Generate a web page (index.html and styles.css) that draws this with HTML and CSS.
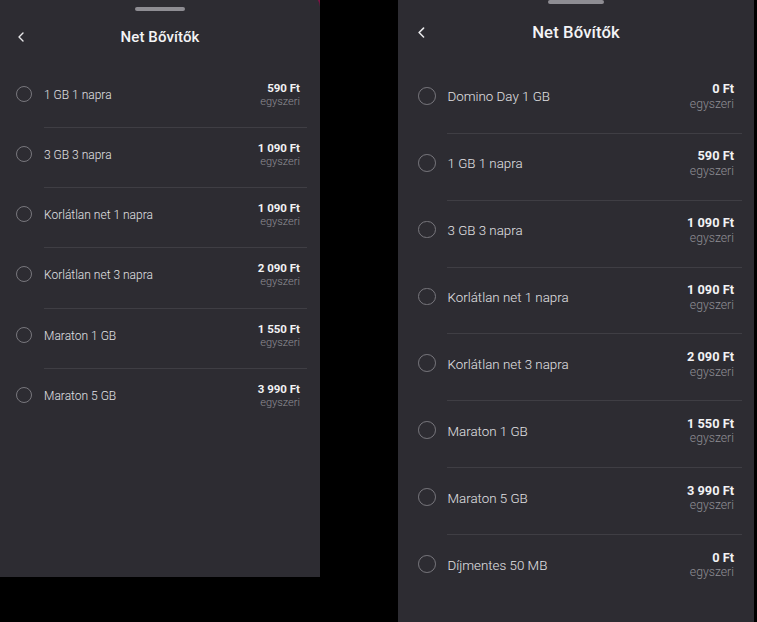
FILE: index.html
```html
<!DOCTYPE html>
<html lang="hu">
<head>
    <meta charset="UTF-8">
    <meta name="viewport" content="width=device-width, initial-scale=1.0">
    <title>Net Bővítők</title>
    <link rel="stylesheet" href="styles.css">
</head>
<body>
    <div class="screens">
        <div class="frame">
            <div class="sheet">
                <div class="handle"></div>
                <div class="header">
                    <button class="back" aria-label="Vissza">
                        <svg width="6" height="10" viewBox="0 0 6 10"><polyline points="5,1 1,5 5,9" fill="none" stroke="#e8e8ea" stroke-width="1.4" stroke-linecap="round" stroke-linejoin="round"/></svg>
                    </button>
                    <h1>Net Bővítők</h1>
                    <span></span>
                </div>
                <ul class="list">
                    <li class="row"><span class="radio"></span><div class="body"><span class="name">1 GB 1 napra</span><div class="price"><strong>590 Ft</strong><small>egyszeri</small></div></div></li>
                    <li class="row"><span class="radio"></span><div class="body"><span class="name">3 GB 3 napra</span><div class="price"><strong>1 090 Ft</strong><small>egyszeri</small></div></div></li>
                    <li class="row"><span class="radio"></span><div class="body"><span class="name">Korlátlan net 1 napra</span><div class="price"><strong>1 090 Ft</strong><small>egyszeri</small></div></div></li>
                    <li class="row"><span class="radio"></span><div class="body"><span class="name">Korlátlan net 3 napra</span><div class="price"><strong>2 090 Ft</strong><small>egyszeri</small></div></div></li>
                    <li class="row"><span class="radio"></span><div class="body"><span class="name">Maraton 1 GB</span><div class="price"><strong>1 550 Ft</strong><small>egyszeri</small></div></div></li>
                    <li class="row"><span class="radio"></span><div class="body"><span class="name">Maraton 5 GB</span><div class="price"><strong>3 990 Ft</strong><small>egyszeri</small></div></div></li>
                </ul>
            </div>
        </div>

        <div class="sheet sheet-large">
            <div class="handle"></div>
            <div class="header">
                <button class="back" aria-label="Vissza">
                    <svg width="6" height="10" viewBox="0 0 6 10"><polyline points="5,1 1,5 5,9" fill="none" stroke="#e8e8ea" stroke-width="1.4" stroke-linecap="round" stroke-linejoin="round"/></svg>
                </button>
                <h1>Net Bővítők</h1>
                <span></span>
            </div>
            <ul class="list">
                <li class="row"><span class="radio"></span><div class="body"><span class="name">Domino Day 1 GB</span><div class="price"><strong>0 Ft</strong><small>egyszeri</small></div></div></li>
                <li class="row"><span class="radio"></span><div class="body"><span class="name">1 GB 1 napra</span><div class="price"><strong>590 Ft</strong><small>egyszeri</small></div></div></li>
                <li class="row"><span class="radio"></span><div class="body"><span class="name">3 GB 3 napra</span><div class="price"><strong>1 090 Ft</strong><small>egyszeri</small></div></div></li>
                <li class="row"><span class="radio"></span><div class="body"><span class="name">Korlátlan net 1 napra</span><div class="price"><strong>1 090 Ft</strong><small>egyszeri</small></div></div></li>
                <li class="row"><span class="radio"></span><div class="body"><span class="name">Korlátlan net 3 napra</span><div class="price"><strong>2 090 Ft</strong><small>egyszeri</small></div></div></li>
                <li class="row"><span class="radio"></span><div class="body"><span class="name">Maraton 1 GB</span><div class="price"><strong>1 550 Ft</strong><small>egyszeri</small></div></div></li>
                <li class="row"><span class="radio"></span><div class="body"><span class="name">Maraton 5 GB</span><div class="price"><strong>3 990 Ft</strong><small>egyszeri</small></div></div></li>
                <li class="row"><span class="radio"></span><div class="body"><span class="name">Díjmentes 50 MB</span><div class="price"><strong>0 Ft</strong><small>egyszeri</small></div></div></li>
            </ul>
        </div>
    </div>
</body>
</html>
```

FILE: styles.css
```css
body { margin: 0; height: 622px; overflow: hidden; background: #000; font-family: Roboto, "Noto Sans", sans-serif; }
.screens { display: flex; gap: 78px; align-items: flex-start; }

.frame { width: 320px; height: 577px; overflow: hidden; background: #7a1343; }
.sheet { width: 320px; height: 600px; padding-top: 12px; box-sizing: border-box; background: #2d2c32; border-top-right-radius: 12px; margin-top: -5px; }
.frame .sheet { height: 582px; }

.handle { width: 50px; height: 4px; margin: 0 auto; border-radius: 2px; background: #8e8d93; }
.header { display: grid; grid-template-columns: 1fr auto 1fr; align-items: center; height: 40px; margin-top: 6px; }
.header h1 { margin: 0; font-size: 15px; font-weight: 500; color: #f4f4f6; letter-spacing: 0.1px; }
.back { justify-self: start; display: flex; padding: 0 0 0 18px; background: none; border: none; cursor: pointer; }

.list { list-style: none; margin: 10.5px 0 0; padding: 0; }
.row { display: flex; align-items: flex-start; padding-left: 16px; }
.radio { flex: none; width: 16px; height: 16px; margin: 18px 12px 0 0; border: 1.5px solid #78777d; border-radius: 50%; box-sizing: border-box; }
.body { flex: 1; display: flex; align-items: center; justify-content: space-between; padding: 13px 7px 18.25px 0; margin-right: 13px; border-bottom: 1px solid #3f3e44; }
.row:last-child .body { border-bottom: none; }
.name { font-size: 12px; font-weight: 300; color: #e2e2e5; }
.price { display: flex; flex-direction: column; align-items: flex-end; }
.price strong { font-size: 11.5px; line-height: 14px; font-weight: 700; color: #f2f2f4; }
.price small { font-size: 11px; line-height: 14px; font-weight: 300; color: #908f95; }

.sheet-large { zoom: 1.1125; margin-top: -12.4px; border-radius: 0; }
.sheet-large .row { padding-left: 18px; }
.sheet-large .radio { margin-right: 10.5px; }
.sheet-large .body { margin-right: 11px; }
```
